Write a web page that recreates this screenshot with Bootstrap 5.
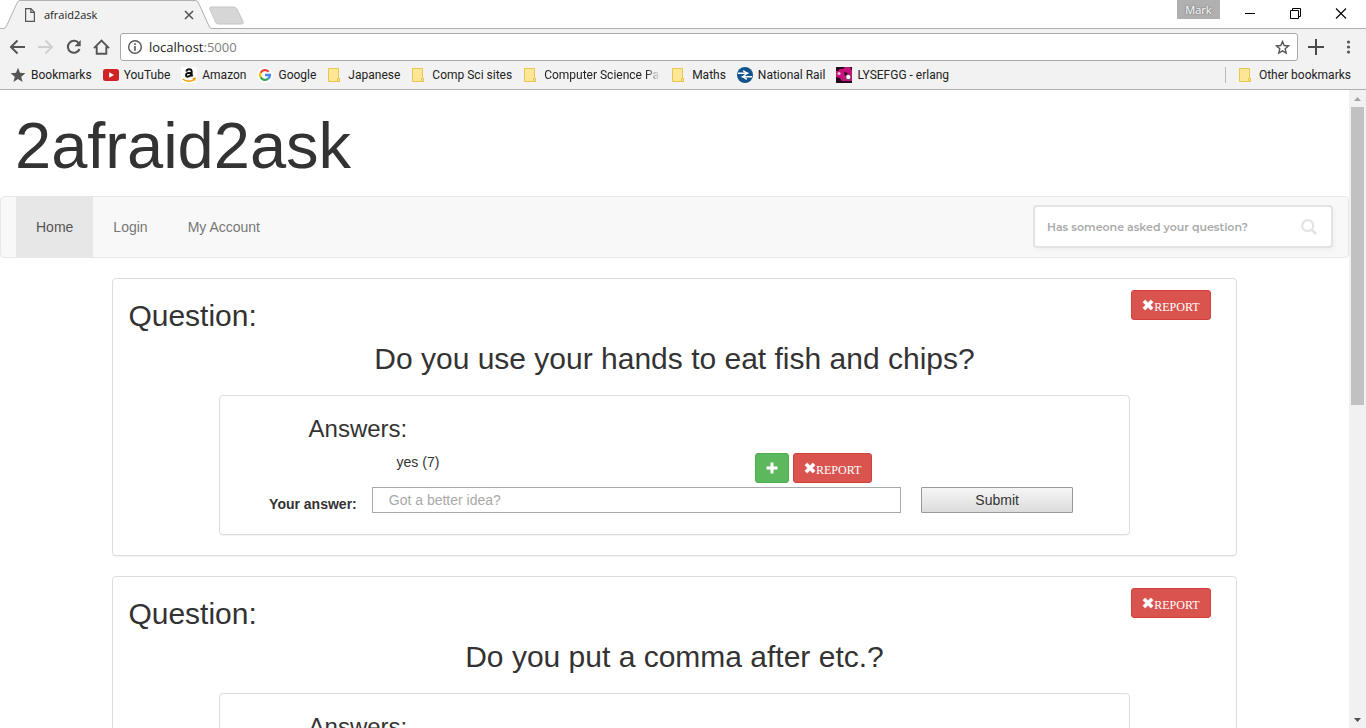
<!DOCTYPE html>
<html lang="en">
<head>
<meta charset="utf-8">
<meta name="viewport" content="width=device-width, initial-scale=1">
<title>afraid2ask</title>
<link href="https://cdn.jsdelivr.net/npm/bootstrap@5.3.0/dist/css/bootstrap.min.css" rel="stylesheet">
<style>
  body { font-family: "Liberation Sans", Arial, sans-serif; font-size: 14px; line-height: 20px; color: #333; background: #fff; }
  svg { display: block; flex: none; }
  button { font-family: inherit; }

  /* browser frame */
  .chrome-ui { font-family: "Open Sans", sans-serif; font-size: 12px; line-height: 16px; color: #222; }
  .title-strip { height: 29px; box-shadow: inset 0 -1px #b0b0b0; }
  .tab-item { width: 209px; height: 29px; }
  .tab-shape { z-index: 0; }
  .tab-body { z-index: 1; padding: 0 14px 0 24px; font-size: 11px; }
  .bare-btn { border: 0; background: none; padding: 0; color: #555; }
  .new-tab { margin-top: 6px; }
  .profile-btn { width: 43px; height: 19px; background: #b0b0b0; color: #fff; font-size: 11px; line-height: 18px; text-shadow: 0 0 2px #555; }
  .win-btns { gap: 34px; padding: 8px 19px 0 24px; }
  .tool-area { background: #f2f2f2; border-bottom: 1px solid #b0b0b0; }
  .tool-row { height: 35px; padding: 1px 12px 0 8px; }
  .address-box { height: 28px; background: #fff; border: 1px solid #a9a9a9; border-radius: 3px; padding: 0 7px 0 6px; font-size: 13px; }
  .address-box span { color: #808080; }
  .address-text { margin-left: 6px; }
  .bookmark-row { height: 25px; padding: 0 15px 4px 10px; font-family: Roboto, sans-serif; }
  .bookmark-links { gap: 11px; }
  .bookmark-row a { display: flex; align-items: center; gap: 5px; color: #222; text-decoration: none; white-space: nowrap; }
  .clipped { width: 116px; overflow: hidden; -webkit-mask-image: linear-gradient(90deg, #000 88%, transparent); mask-image: linear-gradient(90deg, #000 88%, transparent); }
  .divider-line { width: 1px; height: 16px; background: #bbb; }

  /* scrollbar */
  .scroll-track { width: 17px; background: #f1f1f1; flex: none; }
  .scroll-track button { height: 17px; }
  .scroll-thumb { width: 13px; height: 298px; background: #c1c1c1; }

  /* page */
  .site-title { font-size: 65px; line-height: 72px; font-weight: 400; margin: 20px 15px 14px; }
  .site-nav { background: #f8f8f8; border: 1px solid #e7e7e7; border-radius: 4px; padding: 0 15px; margin-bottom: 20px; }
  .site-nav .nav-link { color: #777; padding: 20px; }
  .site-nav .nav-link.active { color: #555; background: #e7e7e7; }
  .search-box { width: 300px; height: 43px; margin-bottom: 1px; background: #fff; border: 2px solid #e3e3e3; border-radius: 4px; padding: 0 14px 0 12px; box-shadow: 2px 3px 4px #f1f1f1; }
  .search-box input { border: 0; outline: 0; padding: 0; background: none; font: 600 11px/16px Montserrat, Inter, sans-serif; color: #777; min-width: 0; }
  .search-box input::placeholder { color: #aaa; opacity: 1; }

  .panel-box { background: #fff; border: 1px solid #ddd; border-radius: 4px; box-shadow: 0 1px 1px rgba(0,0,0,.05); }
  .question-panel { padding: 11px 15px 20px; margin-bottom: 20px; }
  .question-panel h2 { font-size: 30px; line-height: 33px; font-weight: 400; margin: 0; }
  .question-head { margin: 0 10px 10px 0; }
  .question-head h2 { padding-top: 9px; }
  .answer-panel { margin-top: 20px; padding: 20px 15px 21px; }
  .answer-panel h3 { font-size: 24px; line-height: 26px; font-weight: 400; margin: 0 0 10px; }
  .answer-item { min-height: 35px; }
  .answer-text { width: 61%; padding-left: 88px; }
  .answer-actions { padding-top: 1px; }
  .small-btn { display: flex; align-items: center; height: 30px; padding: 0 10px; border-radius: 3px; font-size: 12px; line-height: 18px; color: #fff; }
  .report-btn { background: #d9534f; border: 1px solid #d43f3a; font-family: "Liberation Serif", "Times New Roman", serif; }
  .report-btn span { padding-top: 3px; }
  .vote-btn { background: #5cb85c; border: 1px solid #4cae4c; }
  .answer-form { margin: 0 -15px; }
  .answer-form label { font-weight: 700; text-align: right; padding: 8px 15px 0 0; line-height: 18px; }
  .answer-form input { height: 26px; border: 1px solid #a9a9a9; padding: 0 16px; line-height: 20px; }
  .answer-form input::placeholder { color: #a9a9a9; opacity: 1; }
  .submit-btn { height: 26px; margin-left: 20px; border: 1px solid #999; border-radius: 1px; background: linear-gradient(#f6f6f6, #dcdcdc); color: #333; padding: 0; }
</style>
</head>
<body>
<svg width="0" height="0" class="position-absolute" aria-hidden="true">
  <symbol id="folder" viewBox="0 0 16 16"><path d="M1.500 1.500h10v10h1v3h-11z" fill="#ffe694" stroke="#e8c64f"/><path d="M10.500 14.500v-3h2v3z" fill="#ffe694" stroke="#e8c64f"/></symbol>
  <symbol id="cross" viewBox="0 0 12 12"><path d="M3.200.9 6 3.700 8.800.9l2.300 2.300L8.300 6l2.800 2.800-2.300 2.300L6 8.300l-2.800 2.800L.9 8.800 3.700 6 .9 3.200z" fill="#fff" stroke="#fff" stroke-width=".6" stroke-linejoin="round"/></symbol>
</svg>
<div class="d-flex flex-column vh-100 overflow-hidden">
  <header class="chrome-ui flex-shrink-0">
    <div class="title-strip d-flex align-items-start">
      <div class="tab-item position-relative">
        <svg class="tab-shape position-absolute top-0 start-0" width="212" height="29" viewBox="0 0 212 29"><path d="M0 28.500h3.500q2 0 3-2.500L17 3q1-2.500 3-2.500h175q2.500 0 3.500 2.500L209 26q1 2.500 3 2.500V29H0z" fill="#f2f2f2"/><path d="M0 28.500h3.500q2 0 3-2.500L17 3q1-2.500 3-2.500h175q2.500 0 3.500 2.500L209 26q1 2.500 3 2.500" fill="none" stroke="#b0b0b0"/></svg>
        <div class="tab-body position-relative d-flex align-items-center h-100">
          <svg width="12" height="14" viewBox="0 0 12 14" fill="none" stroke="#555" stroke-width="1.200"><path d="M1.600.6h5.300l3.500 3.600v9.100H1.600zM6.800.6v3.700h3.600"/></svg>
          <span class="ms-2 me-auto">afraid2ask</span>
          <button class="bare-btn" aria-label="Close tab"><svg width="12" height="12" viewBox="0 0 12 12" stroke="#555" stroke-width="1.600"><path d="m2 2 8 8M10 2l-8 8"/></svg></button>
        </div>
      </div>
      <button class="bare-btn new-tab" aria-label="New tab"><svg width="35" height="19" viewBox="0 0 35 19"><path d="M2.500 1h22q2.500 0 3.500 2l6 12.500q1 2.500-1.500 2.500H9.500Q7.500 18 6.500 16L.8 3Q.3 1 2.500 1z" fill="#d6d6d6" stroke="#c6c6c6"/></svg></button>
      <button class="bare-btn profile-btn ms-auto">Mark</button>
      <div class="win-btns d-flex">
        <button class="bare-btn" aria-label="Minimize"><svg width="12" height="11" viewBox="0 0 12 11" stroke="#000"><path d="M1 5.500h10"/></svg></button>
        <button class="bare-btn" aria-label="Restore"><svg width="11" height="11" viewBox="0 0 11 11" fill="none" stroke="#000"><path d="M.5 2.500h8v8h-8zM2.500 2.500v-2h8v8h-2"/></svg></button>
        <button class="bare-btn" aria-label="Close window"><svg width="12" height="11" viewBox="0 0 12 11" stroke="#000" stroke-width="1.100"><path d="m1 .5 10 10M11 .5l-10 10"/></svg></button>
      </div>
    </div>
    <div class="tool-area">
      <div class="tool-row d-flex align-items-center">
        <div class="d-flex gap-2 pe-2">
          <button class="bare-btn" aria-label="Back"><svg width="20" height="20" viewBox="0 0 20 20" fill="none" stroke="#555" stroke-width="2"><path d="M17 10H3.500M9.500 3.500 3 10l6.500 6.500"/></svg></button>
          <button class="bare-btn" aria-label="Forward"><svg width="20" height="20" viewBox="0 0 20 20" fill="none" stroke="#d0d0d0" stroke-width="2"><path d="M2 10h13.500M9.500 3.500 16 10l-6.500 6.500"/></svg></button>
          <button class="bare-btn" aria-label="Reload"><svg width="20" height="20" viewBox="0 0 20 20"><path d="M14.800 6.300A6 6 0 1 0 15.500 12" fill="none" stroke="#555" stroke-width="2.100"/><path d="M16.700 3v6.200h-6.200z" fill="#555"/></svg></button>
          <button class="bare-btn" aria-label="Home"><svg width="20" height="20" viewBox="0 0 20 20" fill="none" stroke="#555" stroke-width="1.900"><path d="M2 11.200 9.500 3.500l7.500 7.700M4.700 9.500v7.300h9.600V9.500"/></svg></button>
        </div>
        <div class="address-box d-flex align-items-center flex-grow-1">
          <svg width="16" height="16" viewBox="0 0 16 16"><circle cx="8" cy="8" r="6.300" fill="none" stroke="#555" stroke-width="1.400"/><path d="M7.200 7h1.600v4.800H7.200zM7.200 4.300h1.600v1.600H7.200z" fill="#555"/></svg>
          <div class="address-text me-auto">localhost<span>:5000</span></div>
          <button class="bare-btn" aria-label="Bookmark this page"><svg width="15" height="15" viewBox="0 0 15 15" fill="none" stroke="#555" stroke-width="1.400"><path d="m7.500 1.500 1.700 4 4.300.4-3.300 2.900 1 4.200-3.700-2.200L3.800 13l1-4.200L1.500 5.900l4.300-.4z"/></svg></button>
        </div>
        <button class="bare-btn ms-2" aria-label="Extension"><svg width="20" height="20" viewBox="0 0 20 20" stroke="#4a4a4a" stroke-width="2"><path d="M2 10h16M10 2v16"/></svg></button>
        <button class="bare-btn ms-3" aria-label="Menu"><svg width="12" height="14" viewBox="0 0 12 14" fill="#555"><circle cx="6.500" cy="2" r="1.600"/><circle cx="6.500" cy="7" r="1.600"/><circle cx="6.500" cy="12" r="1.600"/></svg></button>
      </div>
      <nav class="bookmark-row d-flex align-items-center" aria-label="Bookmarks bar">
        <div class="bookmark-links d-flex">
          <a href="#"><svg width="16" height="16" viewBox="0 0 16 16"><path d="m8 .8 2 5 5.400.4-4.200 3.500 1.400 5.300L8 12.100 3.400 15l1.400-5.300L.6 6.200 6 5.800z" fill="#555"/></svg><span>Bookmarks</span></a>
          <a href="#"><svg width="16" height="16" viewBox="0 0 16 16"><rect y="2" width="16" height="12" rx="2.500" fill="#d02424"/><path d="m6.200 5.300 4.800 2.700-4.800 2.700z" fill="#fff"/></svg><span>YouTube</span></a>
          <a href="#"><svg width="16" height="16" viewBox="0 0 16 16"><rect width="16" height="16" rx="2" fill="#fff"/><path d="M5.300 4.500Q5.700 2.200 8 2.200q2.700 0 2.700 2.400v3.600l.9 1.200M10.600 5.700Q5 5.600 5 8q0 1.700 1.700 1.700 2.600 0 3.900-3" fill="none" stroke="#111" stroke-width="1.900"/><path d="M1.500 12q6 4.200 11.500.6M11.800 11.500l2.400-.2-.6 2.300" fill="none" stroke="#f90" stroke-width="1.300"/></svg><span>Amazon</span></a>
          <a href="#"><svg width="16" height="16" viewBox="0 0 16 16" fill="none" stroke-width="2.300"><circle cx="8" cy="8" r="8" fill="#fff"/><path d="M11.600 4.700A4.900 4.900 0 0 0 3.700 5.700" stroke="#ea4335"/><path d="M3.700 5.700a4.900 4.900 0 0 0 0 4.600" stroke="#fbbc05"/><path d="M3.700 10.300a4.900 4.900 0 0 0 7.500 1.400" stroke="#34a853"/><path d="M11.200 11.700Q12.800 10.400 12.900 8H8" stroke="#4285f4"/></svg><span>Google</span></a>
          <a href="#"><svg width="16" height="16"><use href="#folder"/></svg><span>Japanese</span></a>
          <a href="#"><svg width="16" height="16"><use href="#folder"/></svg><span>Comp Sci sites</span></a>
          <a href="#"><svg width="16" height="16"><use href="#folder"/></svg><span class="clipped">Computer Science Pag</span></a>
          <a href="#"><svg width="16" height="16"><use href="#folder"/></svg><span>Maths</span></a>
          <a href="#"><svg width="16" height="16" viewBox="0 0 16 16"><circle cx="8" cy="8" r="8" fill="#12538d"/><path d="M1 6.300h10.500M4.500 9.700H15" fill="none" stroke="#fff" stroke-width="1.500"/><path d="M6.200 3.700 10 6.300 6 9.700l3.800 2.600" fill="none" stroke="#fff" stroke-width="1.400"/></svg><span>National Rail</span></a>
          <a href="#"><svg width="16" height="16" viewBox="0 0 16 16"><path fill="#c4147c" d="M0 0h16v16H0z"/><path d="M0 0h9l-2 2H4L2 4H0zM0 10l4 1 3 5H0zM8 5l4 1-3 3zM14 0h2v4zM6 14h10v2H6z" fill="#26091c"/><circle cx="12.300" cy="10" r="2.600" fill="#fff" stroke="#26091c" stroke-width=".6"/><circle cx="3" cy="6.500" r="1.600" fill="#f7b6dc"/></svg><span>LYSEFGG - erlang</span></a>
        </div>
        <div class="divider-line ms-auto me-2"></div>
        <a class="ps-1" href="#"><svg width="16" height="16"><use href="#folder"/></svg><span>Other bookmarks</span></a>
      </nav>
    </div>
  </header>

  <div class="d-flex flex-grow-1 overflow-hidden">
    <main class="flex-grow-1 overflow-hidden">
      <h1 class="site-title">2afraid2ask</h1>
      <nav class="site-nav d-flex align-items-center justify-content-between">
        <ul class="nav">
          <li class="nav-item"><a class="nav-link active" href="#" aria-current="page">Home</a></li>
          <li class="nav-item"><a class="nav-link" href="#">Login</a></li>
          <li class="nav-item"><a class="nav-link" href="#">My Account</a></li>
        </ul>
        <form class="search-box d-flex align-items-center">
          <input class="flex-grow-1" type="search" placeholder="Has someone asked your question?" aria-label="Has someone asked your question?">
          <button class="bare-btn" type="button" aria-label="Search"><svg width="16" height="16" viewBox="0 0 16 16" fill="none" stroke="#e3e3e3"><circle cx="6.700" cy="6.700" r="5.500" stroke-width="2.200"/><path d="m10.800 10.800 4.200 4.200" stroke-width="2.600"/></svg></button>
        </form>
      </nav>

      <div class="row g-0">
        <div class="col-10 offset-1">
          <section class="panel-box question-panel">
            <div class="question-head d-flex justify-content-between align-items-start">
              <h2>Question:</h2>
              <button class="small-btn report-btn"><svg width="12" height="12"><use href="#cross"/></svg><span>REPORT</span></button>
            </div>
            <h2 class="text-center">Do you use your hands to eat fish and chips?</h2>
            <div class="row g-0">
              <div class="col-10 offset-1">
                <div class="panel-box answer-panel">
                  <div class="row g-0">
                    <div class="col-10 offset-1">
                      <h3>Answers:</h3>
                      <div class="answer-item d-flex">
                        <div class="answer-text">yes (7)</div>
                        <div class="answer-actions d-flex gap-1 align-items-start">
                          <button class="small-btn vote-btn" aria-label="Vote for this answer"><svg width="12" height="12" viewBox="0 0 12 12"><path d="M4.500.5h3v4h4v3h-4v4h-3v-4h-4v-3h4z" fill="#fff"/></svg></button>
                          <button class="small-btn report-btn"><svg width="12" height="12"><use href="#cross"/></svg><span>REPORT</span></button>
                        </div>
                      </div>
                    </div>
                  </div>
                  <form class="answer-form row g-0">
                    <label class="col-2" for="answer1">Your answer:</label>
                    <input class="col-7" id="answer1" type="text" placeholder="Got a better idea?">
                    <button class="submit-btn col-2" type="button">Submit</button>
                  </form>
                </div>
              </div>
            </div>
          </section>

          <section class="panel-box question-panel">
            <div class="question-head d-flex justify-content-between align-items-start">
              <h2>Question:</h2>
              <button class="small-btn report-btn"><svg width="12" height="12"><use href="#cross"/></svg><span>REPORT</span></button>
            </div>
            <h2 class="text-center">Do you put a comma after etc.?</h2>
            <div class="row g-0">
              <div class="col-10 offset-1">
                <div class="panel-box answer-panel">
                  <div class="row g-0">
                    <div class="col-10 offset-1">
                      <h3>Answers:</h3>
                    </div>
                  </div>
                </div>
              </div>
            </div>
          </section>
        </div>
      </div>
    </main>
    <div class="scroll-track d-flex flex-column align-items-center">
      <button class="bare-btn" aria-label="Scroll up"><svg width="7" height="4" viewBox="0 0 7 4"><path d="M3.500 0 7 4H0z" fill="#a3a3a3"/></svg></button>
      <div class="scroll-thumb"></div>
      <button class="bare-btn mt-auto" aria-label="Scroll down"><svg width="7" height="4" viewBox="0 0 7 4"><path d="M0 0h7L3.500 4z" fill="#505050"/></svg></button>
    </div>
  </div>
</div>
<script src="https://cdn.jsdelivr.net/npm/bootstrap@5.3.0/dist/js/bootstrap.bundle.min.js"></script>
</body>
</html>
